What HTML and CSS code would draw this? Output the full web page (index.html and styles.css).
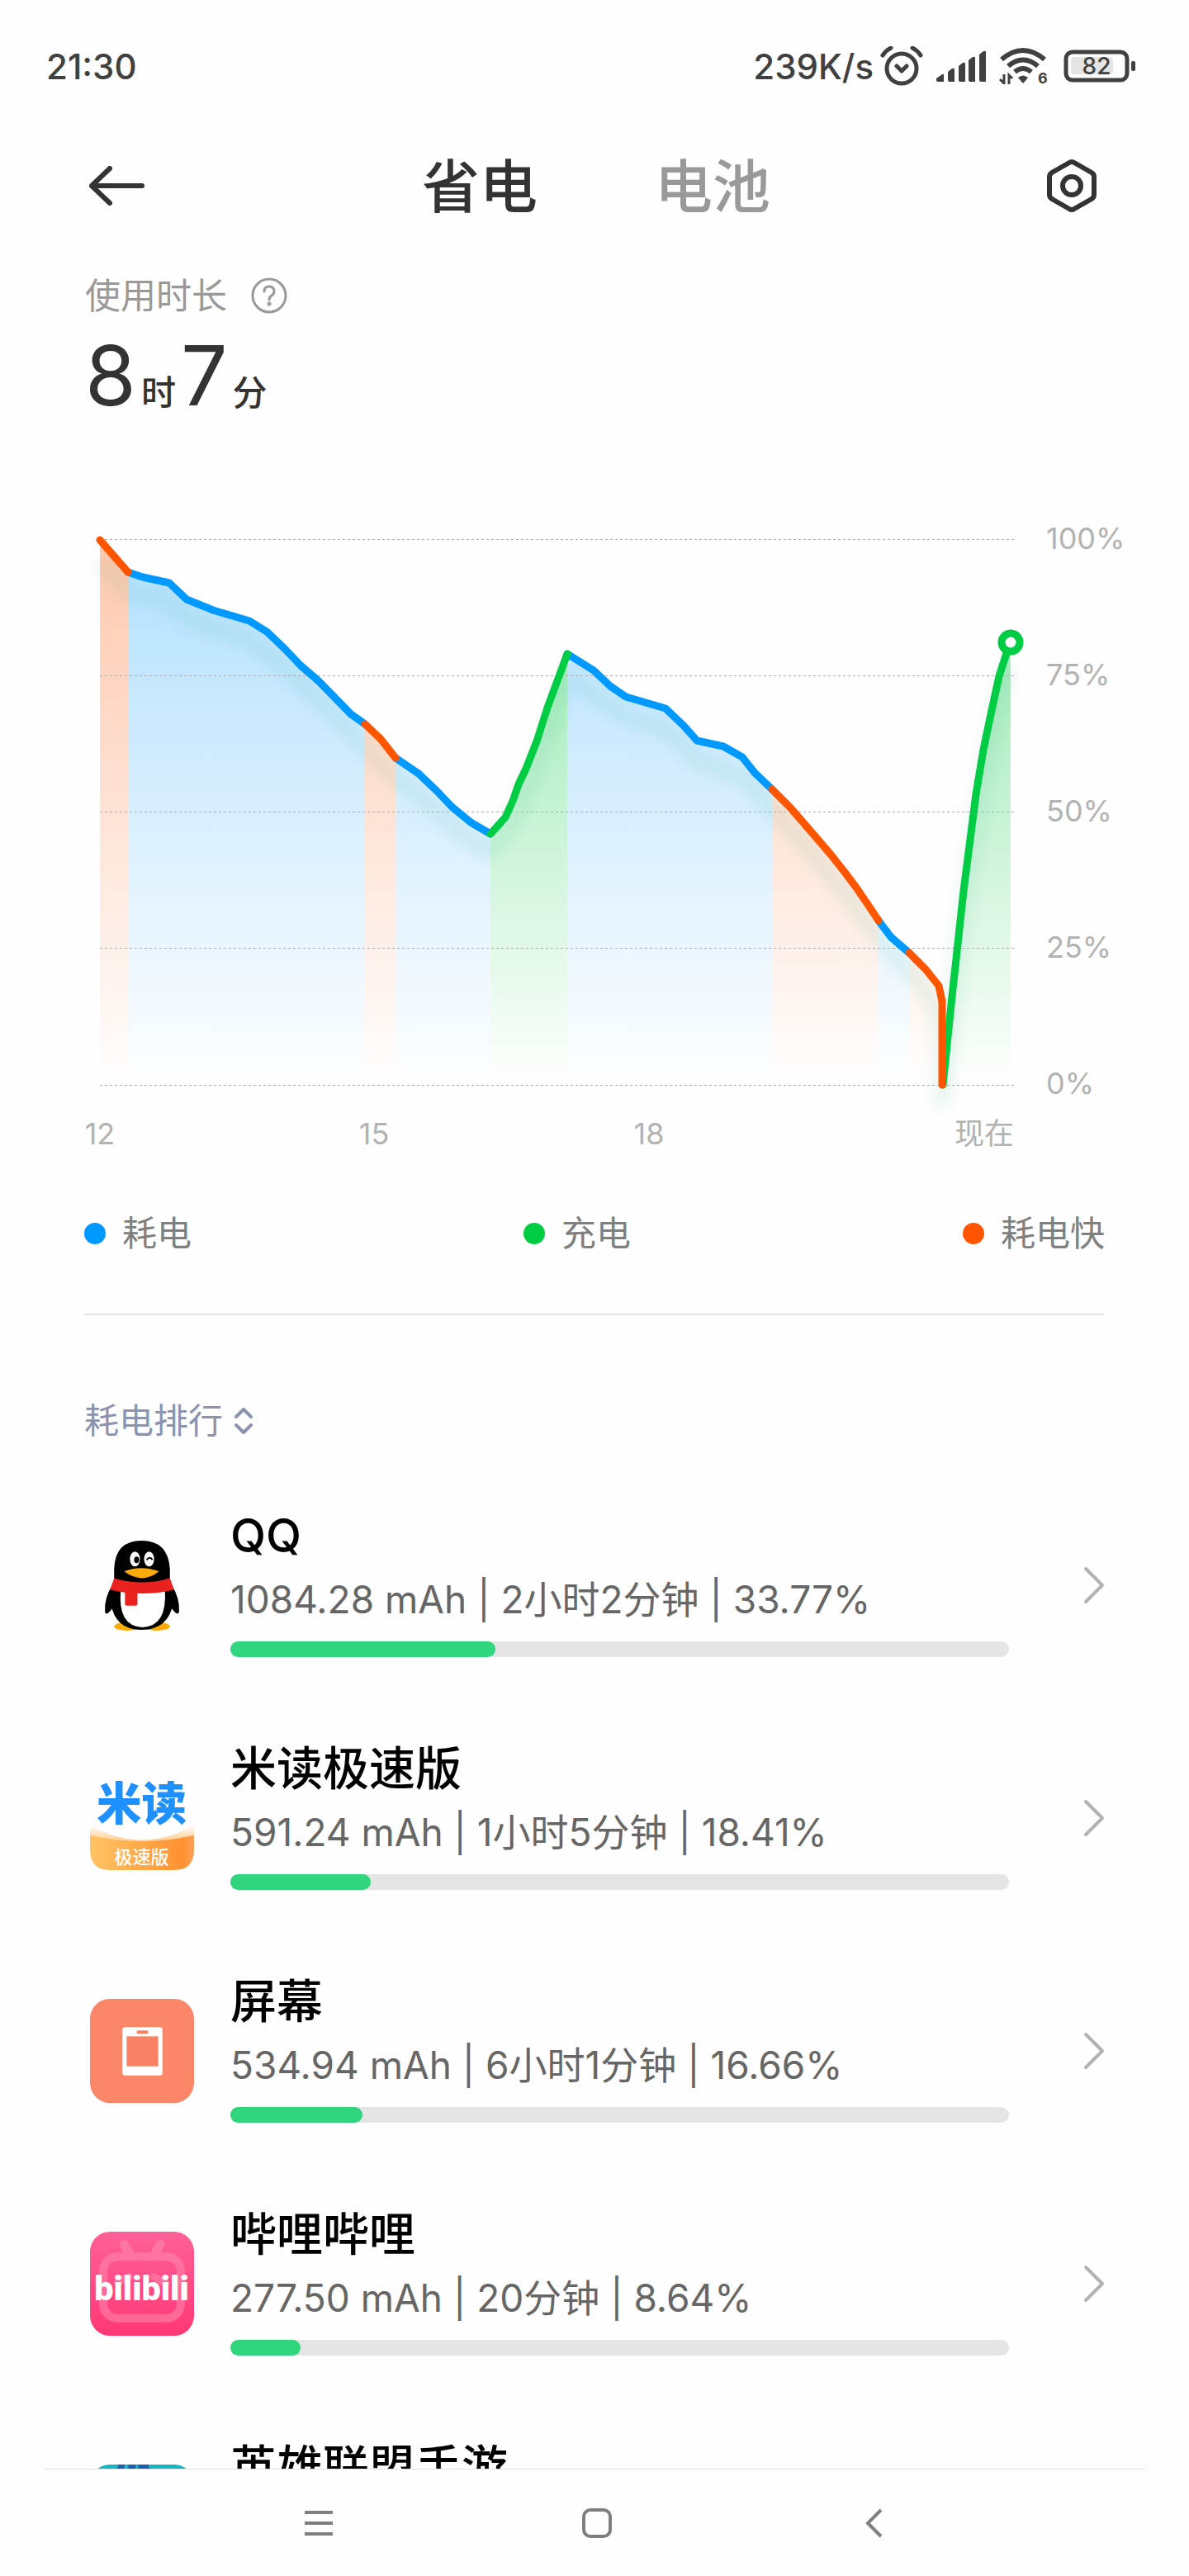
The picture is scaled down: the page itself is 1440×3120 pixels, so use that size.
FILE: index.html
```html
<!DOCTYPE html>
<html lang="zh-CN">
<head>
    <meta charset="UTF-8">
    <meta name="viewport" content="width=device-width, initial-scale=1.0">
    <title>省电</title>
    <link rel="stylesheet" href="styles.css">
</head>
<body>
    <div class="status">
        <span class="clock">21:30</span>
        <div class="status-right">
            <span class="speed">239K/s</span>
            <svg class="alarm" width="52" height="48" viewBox="0 0 52 48" fill="none" stroke="#404040" stroke-width="5" stroke-linecap="round" stroke-linejoin="round">
                <circle cx="26" cy="27" r="18"/>
                <path d="M20 24l6 6 6-6M3 11q4-6 10-9M49 11q-4-6-10-9"/>
            </svg>
            <svg class="signal" width="60" height="40" viewBox="0 0 60 40" fill="#404040">
                <path d="M0 35l7-5q2-1 2 1v8H2q-2 0-2-2zM14 27l5-4q3-1 3 1v15h-6q-2 0-2-2zM27 20l5-4q3-1 3 1v22h-6q-2 0-2-2zM39 13l5-4q3-1 3 1v29h-6q-2 0-2-2zM52 6l5-4q3-1 3 1v36h-6q-2 0-2-2z"/>
            </svg>
            <svg class="wifi" width="62" height="48" viewBox="0 0 62 48">
                <path d="M3 16q26-22 52 0M11 24q18-15 36 0M19 31q10-8 20 0" fill="none" stroke="#404040" stroke-width="6"/>
                <path d="M23 38q6-5 12 0l-5 6q-1 1-2 0z" fill="#404040"/>
                <path d="M6 34v12M6 45l-5-5M12 46V35l4 4" fill="none" stroke="#404040" stroke-width="3"/>
                <text class="wifi-num" x="47" y="45">6</text>
            </svg>
            <svg class="battery" width="88" height="40" viewBox="0 0 88 40">
                <rect x="9" y="9" width="51" height="21" rx="4" fill="#e4e4e4"/>
                <rect x="3" y="3" width="74" height="34" rx="8" fill="none" stroke="#404040" stroke-width="5"/>
                <rect x="82" y="14" width="5" height="12" rx="2" fill="#404040"/>
                <text class="battery-num" x="40" y="30">82</text>
            </svg>
        </div>
    </div>

    <header class="header">
        <button class="icon-btn" aria-label="返回">
            <svg width="68" height="48" viewBox="0 0 68 48" fill="none" stroke="#333" stroke-width="6" stroke-linecap="round" stroke-linejoin="round">
                <path d="M25 3L3 24l22 21M3 24h61"/>
            </svg>
        </button>
        <div class="tabs">
            <button class="tab act">省电</button>
            <button class="tab">电池</button>
        </div>
        <button class="icon-btn" aria-label="设置">
            <svg width="60" height="66" viewBox="0 0 60 66" fill="none" stroke="#333" stroke-width="6" stroke-linejoin="round">
                <path d="M27 5q3-2 6 0l21 12q3 2 3 5v22q0 3-3 5L33 61q-3 2-6 0L6 49q-3-2-3-5V22q0-3 3-5z"/>
                <circle cx="30" cy="33" r="11"/>
            </svg>
        </button>
    </header>

    <main class="content">
        <section class="usage">
            <div class="usage-title">
                <span>使用时长</span>
                <button class="icon-btn" aria-label="说明">
                    <svg width="46" height="46" viewBox="0 0 46 46" fill="none" stroke="#999" stroke-width="3" stroke-linecap="round">
                        <circle cx="23" cy="23" r="20"/>
                        <path d="M17 18q0-6 6-6t6 6q0 3-3 5t-3 5"/>
                        <circle cx="23" cy="33" r="1"/>
                    </svg>
                </button>
            </div>
            <div class="usage-time">
                <span class="num">8</span><span class="unit">时</span><span class="num">7</span><span class="unit">分</span>
            </div>
        </section>

        <!-- 电量曲线 -->
        <svg class="chart" viewBox="0 0 1440 800">
            <defs>
                <linearGradient id="gBlue" gradientUnits="userSpaceOnUse" x1="0" y1="34" x2="0" y2="694">
                    <stop offset="0" stop-color="#0099ff" stop-opacity=".3"/>
                    <stop offset="1" stop-color="#0099ff" stop-opacity="0"/>
                </linearGradient>
                <linearGradient id="gOrange" gradientUnits="userSpaceOnUse" x1="0" y1="34" x2="0" y2="694">
                    <stop offset="0" stop-color="#ff5500" stop-opacity=".32"/>
                    <stop offset="1" stop-color="#ff5500" stop-opacity="0"/>
                </linearGradient>
                <linearGradient id="gGreen" gradientUnits="userSpaceOnUse" x1="0" y1="34" x2="0" y2="694">
                    <stop offset="0" stop-color="#00cc44" stop-opacity=".44"/>
                    <stop offset="1" stop-color="#00cc44" stop-opacity="0"/>
                </linearGradient>
                <filter id="blur" x="-10%" y="-10%" width="120%" height="130%">
                    <feGaussianBlur stdDeviation="9"/>
                </filter>
            </defs>
            <path fill="url(#gOrange)" d="M121 34L155 73V694H121zM442 257L461 275 479 298V694H442zM935 336L957 358 989 395 1007 416 1022 435 1037 455 1050 474 1064 495V694H935zM1101 534L1121 554 1137 574 1141 593V694H1101z"/>
            <path fill="url(#gBlue)" d="M155 73L173 79 205 86 226 106 258 119 302 132 323 145 344 165 364 186 386 205 425 245 442 257V694H155zM479 298L507 317 529 338 547 357 570 376 594 390V694H479zM687 172L719 192 739 211 758 224 806 238 828 259 844 277 876 284 899 297 914 316 935 336V694H687zM1064 495L1079 515 1101 534V694H1064z"/>
            <path fill="url(#gGreen)" d="M594 390L612 370 621 350 628 330 637 311 650 278 663 237 687 172V694H594zM1142 694L1153 587 1167 459 1182 342 1191 288 1200 245 1210 199 1224 158V694z"/>
            <path class="shadow" filter="url(#blur)" d="M121 60L155 97 205 110 226 130 302 156 344 189 386 229 425 269 479 322 529 362 570 400 594 412 621 376 650 306 687 200 758 248 806 262 844 301 899 321 935 360 989 419 1037 479 1064 519 1121 578 1141 617V720L1167 480 1200 268 1220 190"/>
            <path class="grid" d="M121 33.5H1228M121 198.5H1228M121 363.5H1228M121 528.5H1228M121 694.5H1228"/>
            <path class="line blue" d="M155 73L173 79 205 86 226 106 258 119 302 132 323 145 344 165 364 186 386 205 425 245 442 257M479 298L507 317 529 338 547 357 570 376 594 390M687 172L719 192 739 211 758 224 806 238 828 259 844 277 876 284 899 297 914 316 935 336M1064 495L1079 515 1101 534"/>
            <path class="line green" d="M594 390L612 370 621 350 628 330 637 311 650 278 663 237 687 172M1142 694L1153 587 1167 459 1182 342 1191 288 1200 245 1210 199 1219 171 1224 158"/>
            <path class="line orange" d="M121 34L155 73M442 257L461 275 479 298M935 336L957 358 989 395 1007 416 1022 435 1037 455 1050 474 1064 495M1101 534L1121 554 1137 574 1141 593V694"/>
            <circle cx="1224" cy="158" r="11" fill="#fff" stroke="#00cc44" stroke-width="9"/>
            <g class="axis">
                <text x="1267" y="45">100%</text>
                <text x="1267" y="210">75%</text>
                <text x="1267" y="375">50%</text>
                <text x="1267" y="540">25%</text>
                <text x="1267" y="705">0%</text>
                <g text-anchor="middle">
                    <text x="121" y="766">12</text>
                    <text x="453" y="766">15</text>
                    <text x="786" y="766">18</text>
                </g>
                <text x="1228" y="766" text-anchor="end">现在</text>
            </g>
        </svg>

        <ul class="legend">
            <li><i class="dot dot-blue"></i>耗电</li>
            <li><i class="dot dot-green"></i>充电</li>
            <li><i class="dot dot-orange"></i>耗电快</li>
        </ul>

        <section class="rank">
            <button class="sort">
                耗电排行
                <svg width="22" height="32" viewBox="0 0 22 32" fill="none" stroke="#8c93b0" stroke-width="4" stroke-linecap="round" stroke-linejoin="round">
                    <path d="M2 11l9-9 9 9M2 21l9 9 9-9"/>
                </svg>
            </button>
            <ul class="apps">
                <li>
                    <a class="app" href="#">
                        <svg class="logo" viewBox="0 0 125 125">
                            <ellipse cx="45" cy="112" rx="16" ry="5" fill="#faab07"/>
                            <ellipse cx="80" cy="112" rx="16" ry="5" fill="#faab07"/>
                            <path d="M27 62Q17 78 18 94q1 7 9-4zM98 62q10 16 9 32-1 7-9-4z"/>
                            <path d="M29 56V43Q30 9 62 9t34 34v13q6 14 4 28-6 32-38 32T25 84q-2-14 4-28z"/>
                            <path d="M37 68h53q3 44-27 45Q33 112 37 68z" fill="#fff"/>
                            <path d="M29 54q33 10 67 0l5 14q-38 9-77 0z" fill="#e9211f"/>
                            <path d="M42 67h15v18q0 2-2 2H44q-2 0-2-2z" fill="#e9211f"/>
                            <ellipse cx="54" cy="31" rx="6" ry="9" fill="#fff"/>
                            <ellipse cx="71" cy="31" rx="6" ry="9" fill="#fff"/>
                            <ellipse cx="56" cy="32" rx="3" ry="4"/>
                            <path d="M68 32q4-5 7 0" fill="none" stroke="#000" stroke-width="2"/>
                            <path d="M41 46q20-8 42 0-20 16-42 0z" fill="#faab07"/>
                        </svg>
                        <div class="info">
                            <h2 class="name">QQ</h2>
                            <p class="detail">1084.28 mAh | 2小时2分钟 | 33.77%</p>
                            <div class="bar"><div class="fill" style="width:34%"></div></div>
                        </div>
                        <svg class="more" viewBox="0 0 26 46"><path d="M3 3l20 20L3 43"/></svg>
                    </a>
                </li>
                <li>
                    <a class="app" href="#">
                        <svg class="logo" viewBox="0 0 125 125">
                            <defs>
                                <linearGradient id="gMidu" x1="0" y1="0" x2="1" y2="0">
                                    <stop offset="0" stop-color="#ffc464"/>
                                    <stop offset=".9" stop-color="#ff9232"/>
                                    <stop offset="1" stop-color="#ffa159"/>
                                </linearGradient>
                                <linearGradient id="gHaze" x1="0" y1="0" x2="0" y2="1">
                                    <stop offset="0" stop-color="#ffb45a" stop-opacity="0"/>
                                    <stop offset="1" stop-color="#ffb45a" stop-opacity=".7"/>
                                </linearGradient>
                            </defs>
                            <path d="M0 71q62 36 125 0v14q-62 12-125 0z" fill="url(#gHaze)"/>
                            <path d="M0 83q62 15 125 0v18q0 24-24 24H24Q0 125 0 101z" fill="url(#gMidu)"/>
                            <text class="midu" x="62" y="64">米读</text>
                            <text class="midu-sub" x="62" y="117">极速版</text>
                        </svg>
                        <div class="info">
                            <h2 class="name">米读极速版</h2>
                            <p class="detail">591.24 mAh | 1小时5分钟 | 18.41%</p>
                            <div class="bar"><div class="fill" style="width:18%"></div></div>
                        </div>
                        <svg class="more" viewBox="0 0 26 46"><path d="M3 3l20 20L3 43"/></svg>
                    </a>
                </li>
                <li>
                    <a class="app" href="#">
                        <svg class="logo" viewBox="0 0 125 125">
                            <rect width="125" height="125" rx="24" fill="#fb8668"/>
                            <rect x="39" y="34" width="48" height="58" rx="3" fill="#fff"/>
                            <rect x="44" y="45" width="38" height="36" fill="#f98264"/>
                            <rect x="56" y="38" width="14" height="4" rx="2" fill="#f98264"/>
                        </svg>
                        <div class="info">
                            <h2 class="name">屏幕</h2>
                            <p class="detail">534.94 mAh | 6小时1分钟 | 16.66%</p>
                            <div class="bar"><div class="fill" style="width:17%"></div></div>
                        </div>
                        <svg class="more" viewBox="0 0 26 46"><path d="M3 3l20 20L3 43"/></svg>
                    </a>
                </li>
                <li>
                    <a class="app" href="#">
                        <svg class="logo" viewBox="0 0 125 125">
                            <defs>
                                <linearGradient id="gBili" x1="0" y1="0" x2="0" y2="1">
                                    <stop offset="0" stop-color="#ff6097"/>
                                    <stop offset="1" stop-color="#ff3875"/>
                                </linearGradient>
                            </defs>
                            <rect width="125" height="125" rx="24" fill="url(#gBili)"/>
                            <g fill="none" stroke="#ff8fb4" stroke-linecap="round" opacity=".5">
                                <rect x="16" y="30" width="93" height="74" rx="17" stroke-width="10"/>
                                <path d="M41 15l7 13M84 15l-7 13" stroke-width="11"/>
                                <path d="M33 61l14-7M77 54l14 8" stroke-width="9"/>
                            </g>
                            <text class="bili" x="62" y="82">bilibili</text>
                        </svg>
                        <div class="info">
                            <h2 class="name">哔哩哔哩</h2>
                            <p class="detail">277.50 mAh | 20分钟 | 8.64%</p>
                            <div class="bar"><div class="fill" style="width:9%"></div></div>
                        </div>
                        <svg class="more" viewBox="0 0 26 46"><path d="M3 3l20 20L3 43"/></svg>
                    </a>
                </li>
                <li>
                    <a class="app" href="#">
                        <svg class="logo" viewBox="0 0 125 125">
                            <rect width="125" height="125" rx="24" fill="#19b5c4"/>
                            <path d="M34 0h8l-3 12h-8zM46 0h9v12h-9zM58 0h12l4 12H58z" fill="#1c5fae"/>
                        </svg>
                        <div class="info">
                            <h2 class="name">英雄联盟手游</h2>
                        </div>
                    </a>
                </li>
            </ul>
        </section>
    </main>

    <nav class="navbar">
        <button class="icon-btn" aria-label="最近任务">
            <svg width="40" height="40" viewBox="0 0 40 40"><path d="M3 7h34M3 20h34M3 33h34"/></svg>
        </button>
        <button class="icon-btn" aria-label="主屏幕">
            <svg width="40" height="40" viewBox="0 0 40 40"><rect x="4" y="4" width="32" height="32" rx="8"/></svg>
        </button>
        <button class="icon-btn" aria-label="返回上一级">
            <svg width="40" height="40" viewBox="0 0 40 40"><path d="M27 4L11 20l16 16"/></svg>
        </button>
    </nav>
</body>
</html>
```

FILE: styles.css
```css
*{
    box-sizing: border-box;
}
body{
    margin: 0;
    height: 100vh;
    display: flex;
    flex-direction: column;
    background: #fefefe;
    color: #333;
    font-family: Inter, "Noto Sans CJK SC", sans-serif;
}
ul{
    list-style: none;
    margin: 0;
    padding: 0;
}
button{
    border: 0;
    padding: 0;
    background: none;
    font-family: inherit;
    cursor: pointer;
}
svg{
    display: block;
}
.status{
    flex: none;
    height: 160px;
    padding: 0 64px 0 56px;
    display: flex;
    align-items: center;
    justify-content: space-between;
    font-size: 42px;
    font-weight: 500;
    color: #404040;
}
.status-right{
    display: flex;
    align-items: center;
}
.alarm{
    margin-left: 8px;
}
.signal,
.wifi,
.battery{
    margin-left: 16px;
}
.wifi-num{
    font-size: 18px;
    font-weight: 700;
    fill: #404040;
}
.battery-num{
    font-size: 28px;
    font-weight: 500;
    fill: #404040;
    text-anchor: middle;
}
.header{
    flex: none;
    height: 130px;
    padding: 0 112px 0 108px;
    display: flex;
    align-items: center;
    justify-content: space-between;
}
.tabs{
    display: flex;
    gap: 142px;
}
.tab{
    padding-top: 4px;
    font-size: 70px;
    line-height: 80px;
    font-weight: 500;
    color: #999;
}
.tab.act{
    color: #333;
}
.content{
    flex: 1;
    min-height: 0;
    overflow: hidden;
}
.usage{
    height: 330px;
    padding: 38px 103px 0;
}
.usage-title{
    display: flex;
    align-items: center;
    gap: 28px;
    font-size: 43px;
    line-height: 60px;
    color: #999;
}
.usage-time{
    display: flex;
    align-items: baseline;
    gap: 6px;
}
.usage-time .num{
    font-size: 100px;
    line-height: 134px;
}
.usage-time .unit{
    font-size: 42px;
    font-weight: 500;
}
.chart{
    width: 100%;
    height: auto;
}
.grid{
    stroke: #aaa;
    stroke-width: 1;
    stroke-dasharray: 3 3;
}
.shadow{
    fill: none;
    stroke: #00a070;
    stroke-width: 16;
    opacity: .1;
}
.line{
    fill: none;
    stroke-width: 9;
    stroke-linecap: round;
    stroke-linejoin: round;
}
.line.blue{
    stroke: #0099ff;
}
.line.green{
    stroke: #00cc44;
}
.line.orange{
    stroke: #ff5500;
}
.axis{
    font-size: 36px;
    fill: #b2b2b2;
}
.legend{
    margin: 44px 102px 0;
    padding-bottom: 67px;
    border-bottom: 2px solid #e5e5e5;
    display: flex;
    justify-content: space-between;
    font-size: 42px;
    line-height: 60px;
    color: #7f7f7f;
}
.legend li{
    display: flex;
    align-items: center;
    gap: 20px;
}
.dot{
    width: 26px;
    height: 26px;
    border-radius: 50%;
}
.dot-blue{
    background: #0099ff;
}
.dot-green{
    background: #00cc44;
}
.dot-orange{
    background: #ff5500;
}
.rank{
    padding: 98px 102px 0;
}
.sort{
    display: flex;
    align-items: center;
    gap: 14px;
    font-size: 42px;
    line-height: 60px;
    color: #8c93b0;
}
.apps{
    margin-top: 28px;
}
.app{
    height: 282px;
    padding-left: 7px;
    display: flex;
    align-items: center;
    color: #000;
    text-decoration: none;
}
.logo{
    flex: none;
    width: 126px;
    height: 126px;
}
.info{
    flex: 1;
    min-height: 174px;
    margin: 0 90px 0 44px;
}
.name{
    margin: 0;
    font-size: 56px;
    line-height: 54px;
    font-weight: 500;
}
.detail{
    margin: 20px 0 21px;
    font-size: 46px;
    line-height: 60px;
    color: #666;
}
.bar{
    height: 19px;
    border-radius: 10px;
    background: #e5e5e5;
}
.fill{
    height: 100%;
    border-radius: 10px;
    background: #30d57d;
}
.more{
    flex: none;
    width: 26px;
    height: 46px;
    fill: none;
    stroke: #b2b2b2;
    stroke-width: 4;
    stroke-linecap: round;
    stroke-linejoin: round;
}
.midu{
    font-size: 54px;
    font-weight: 900;
    fill: #1e90ff;
    text-anchor: middle;
}
.midu-sub{
    font-size: 22px;
    font-weight: 500;
    fill: #fff;
    text-anchor: middle;
}
.bili{
    font-family: Roboto, sans-serif;
    font-size: 41px;
    font-weight: 900;
    fill: #fff;
    text-anchor: middle;
}
.navbar{
    flex: none;
    height: 130px;
    margin: 0 52px;
    padding: 0 308px 0 314px;
    border-top: 1px solid #e0e0e0;
    display: flex;
    align-items: center;
    justify-content: space-between;
}
.navbar svg{
    fill: none;
    stroke: #7f7f7f;
    stroke-width: 4;
}
```
